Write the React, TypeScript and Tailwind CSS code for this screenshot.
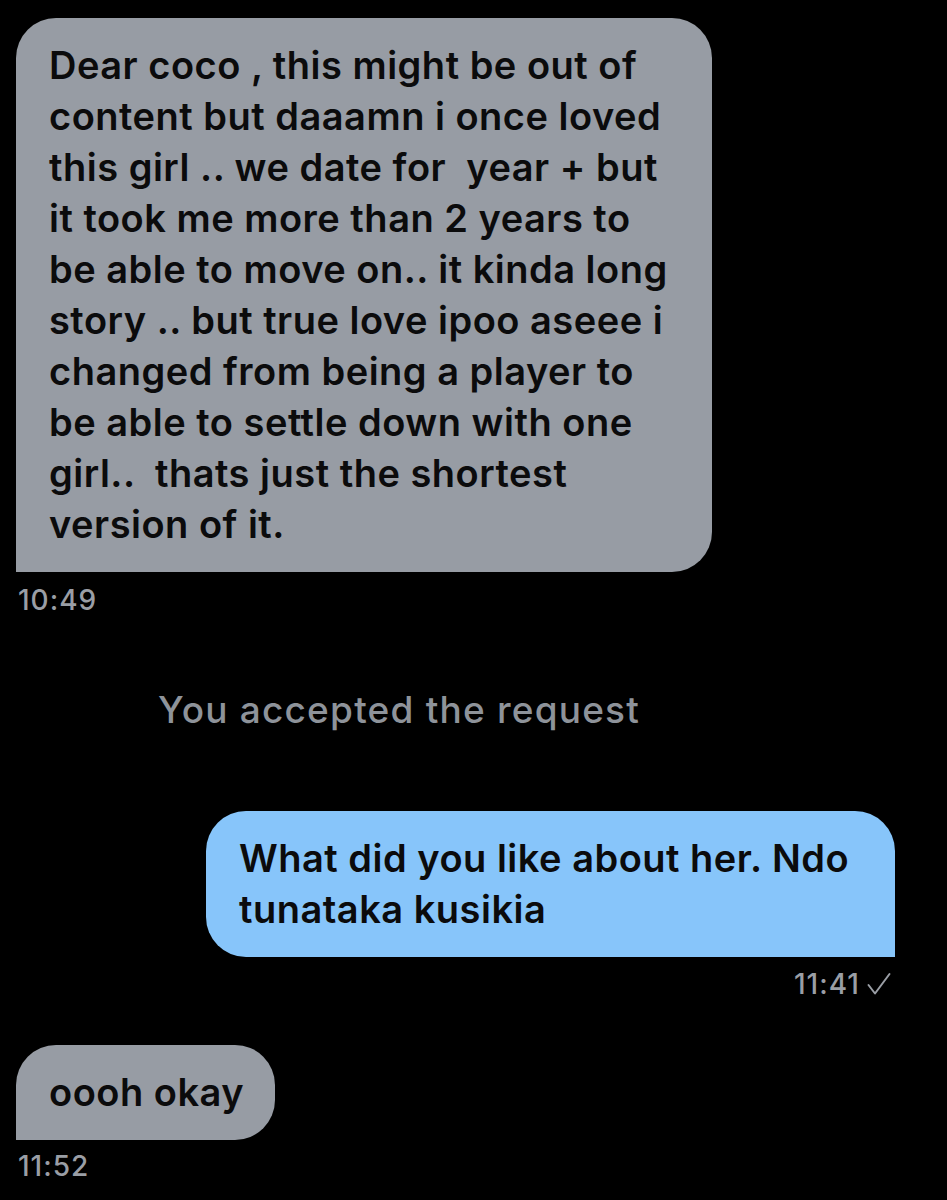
import type React from "react"

const firstLines = [
  "Dear coco , this might be out of",
  "content but daaamn i once loved",
  "this girl .. we date for  year + but",
  "it took me more than 2 years to",
  "be able to move on.. it kinda long",
  "story .. but true love ipoo aseee i",
  "changed from being a player to",
  "be able to settle down with one",
  "girl..  thats just the shortest",
  "version of it.",
]

const Lines: React.FC<{ lines: string[] }> = ({ lines }) => (
  <>
    {lines.map((l, i) => (
      <div key={i} className="whitespace-pre">
        {l}
      </div>
    ))}
  </>
)

const App: React.FC = () => {
  return (
    <div className="min-h-[1200px] w-[947px] bg-black overflow-hidden font-['Inter','Noto_Sans',sans-serif]">
      <div className="flex flex-col pt-[18px]">
        {/* incoming long message */}
        <div className="ml-4 w-[696px] rounded-t-[40px] rounded-br-[40px] bg-[#979ca4] pl-[33px] py-[22px] text-[38px] leading-[51px] font-semibold text-[#0b0b0c] tracking-[0.5px]">
          <Lines lines={firstLines} />
        </div>
        <div className="ml-[18px] mt-3 h-8 leading-8 text-[28px] font-medium text-[#9a9ea5] tracking-[1px]">10:49</div>

        <div className="mt-[72px] h-11 leading-[44px] pl-[158px] text-[37px] font-medium text-[#8e939a] tracking-[1.2px]">
          You accepted the request
        </div>

        {/* outgoing */}
        <div className="mt-[79px] ml-[206px] w-[689px] rounded-t-[40px] rounded-bl-[40px] bg-[#87c5fa] pl-[33px] py-[22px] text-[38px] leading-[51px] font-semibold text-[#0b0b0c] tracking-[0.5px]">
          <Lines lines={["What did you like about her. Ndo", "tunataka kusikia"]} />
        </div>
        <div className="mt-[11px] h-8 w-[895px] flex items-center justify-end gap-[7px] pr-[4px] text-[28px] font-medium text-[#9a9ea5] tracking-[1px]">
          <span className="leading-8">11:41</span>
          <svg width="24" height="24" viewBox="0 0 24 24" fill="none" stroke="#9a9ea5" strokeWidth="2" strokeLinecap="round" strokeLinejoin="round">
            <path d="M1.5 13 L8 21.5 L22.5 2" />
          </svg>
        </div>

        {/* incoming short */}
        <div className="mt-[45px] ml-4 w-[259px] rounded-t-[40px] rounded-br-[40px] bg-[#979ca4] pl-[33px] py-[22px] text-[38px] leading-[51px] font-semibold text-[#0b0b0c] tracking-[0.5px]">
          oooh okay
        </div>
        <div className="ml-[18px] mt-[10px] h-8 leading-8 text-[28px] font-medium text-[#9a9ea5] tracking-[1px]">11:52</div>
      </div>
    </div>
  )
}

export default App
